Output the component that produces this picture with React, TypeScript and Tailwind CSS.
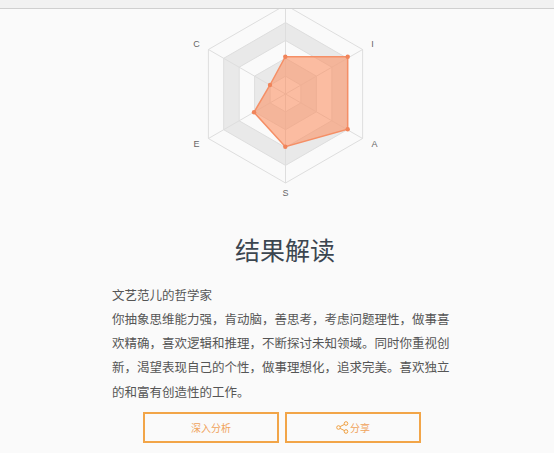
import React from "react";

const cx = 285.5;
const cy = 85;
const hex = (r: number) =>
  [0, 60, 120, 180, 240, 300]
    .map((a) => {
      const t = (a * Math.PI) / 180;
      return `${(cx + r * Math.sin(t)).toFixed(1)},${(cy - r * Math.cos(t)).toFixed(1)}`;
    })
    .join(" ");

const data: [number, number][] = [
  [285.3, 47.7],
  [347.7, 47.7],
  [347.7, 120.3],
  [285.3, 137.7],
  [254, 103.3],
  [270, 76],
];

const rings = [89, 71.4, 53.5, 35.7, 17.8];
const fills = ["#fafafa", "#e9e9e9", "#fafafa", "#e9e9e9", "#fafafa"];

function Radar() {
  return (
    <svg width="554" height="194" viewBox="0 0 554 194" className="block">
      {rings.map((r, i) => (
        <polygon key={r} points={hex(r)} fill={fills[i]} stroke="#dedede" strokeWidth="1" />
      ))}
      {[0, 60, 120].map((a) => {
        const t = (a * Math.PI) / 180;
        const dx = 89 * Math.sin(t);
        const dy = 89 * Math.cos(t);
        return <line key={a} x1={cx - dx} y1={cy + dy} x2={cx + dx} y2={cy - dy} stroke="#dedede" strokeWidth="1" />;
      })}
      <polygon points={data.map((p) => p.join(",")).join(" ")} fill="#fc8f60" fillOpacity="0.58" stroke="#f58f66" strokeWidth="1.5" />
      {data.map((p, i) => (
        <circle key={i} cx={p[0]} cy={p[1]} r="2.2" fill="#f0845a" />
      ))}
      <g fontSize="9" fill="#666" fontFamily="'Liberation Sans', sans-serif" textAnchor="middle">
        <text x="196.5" y="37.5">C</text>
        <text x="372.5" y="37.5">I</text>
        <text x="374.5" y="137.5">A</text>
        <text x="196.5" y="137.5">E</text>
        <text x="285.5" y="186.5">S</text>
      </g>
    </svg>
  );
}

function ShareIcon() {
  return (
    <svg width="13" height="13" viewBox="0 0 13 13" fill="none" stroke="#f0a040" strokeWidth="1">
      <circle cx="2.5" cy="6.5" r="1.8" />
      <circle cx="10" cy="2.5" r="1.8" />
      <circle cx="10" cy="10.5" r="1.8" />
      <path d="M4.1 5.6 8.4 3.4M4.1 7.4 8.4 9.6" />
    </svg>
  );
}

export default function App() {
  return (
    <div
      className="w-[554px] h-[453px] overflow-hidden bg-[#fafafa] text-[#555]"
      style={{ fontFamily: "'Noto Sans CJK SC', 'Liberation Sans', sans-serif" }}
    >
      <div className="h-[9px] bg-[#f1f1f1] border-b border-[#cfcfcf]" />
      <Radar />
      <h1 className="mt-[28px] ml-[235px] text-[25px] leading-[36px] font-normal text-[#3c4650]">结果解读</h1>
      <div className="mt-[15.5px] ml-[112px] w-[340px] text-[12.5px] leading-[24.3px]">
        <p>文艺范儿的哲学家</p>
        <p>你抽象思维能力强，肯动脑，善思考，考虑问题理性，做事喜欢精确，喜欢逻辑和推理，不断探讨未知领域。同时你重视创新，渴望表现自己的个性，做事理想化，追求完美。喜欢独立的和富有创造性的工作。</p>
      </div>
      <div className="mt-[8.5px] ml-[143px] flex gap-[6px]">
        <button className="w-[136px] h-[31px] border-2 border-[#f2a548] text-[10px] text-[#f0a35a] flex items-center justify-center">
          深入分析
        </button>
        <button className="w-[136px] h-[31px] border-2 border-[#f2a548] text-[10px] text-[#f0a35a] flex items-center justify-center gap-[1px]">
          <ShareIcon />
          分享
        </button>
      </div>
    </div>
  );
}
